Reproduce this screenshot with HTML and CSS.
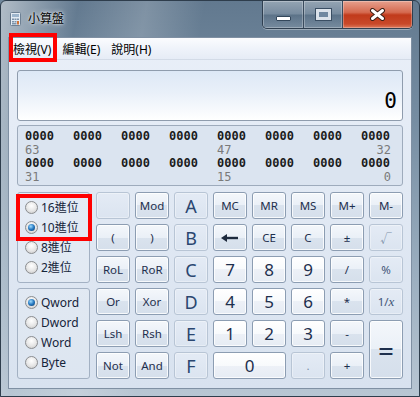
FILE: index.html
```html
<!DOCTYPE html>
<html lang="zh-Hant">
<head>
    <meta charset="UTF-8">
    <title>小算盤</title>
    <link rel="stylesheet" href="styles.css">
</head>
<body>
    <div class="window">
        <div class="titlebar">
            <svg class="app-icon" width="11" height="14" viewBox="0 0 11 14">
                <rect x="0.5" y="0.5" width="10" height="13" rx="1" fill="#e3ebf3" stroke="#6d8094"/>
                <rect x="2" y="2" width="7" height="3" fill="#9db5cc"/>
                <rect x="2" y="6.5" width="2" height="1.5" fill="#7d93aa"/>
                <rect x="4.5" y="6.5" width="2" height="1.5" fill="#7d93aa"/>
                <rect x="7" y="6.5" width="2" height="1.5" fill="#7d93aa"/>
                <rect x="2" y="9" width="2" height="1.5" fill="#7d93aa"/>
                <rect x="4.5" y="9" width="2" height="1.5" fill="#7d93aa"/>
                <rect x="7" y="9" width="2" height="3.5" fill="#d0743a"/>
                <rect x="2" y="11" width="4.5" height="1.5" fill="#7d93aa"/>
            </svg>
            <span class="title">小算盤</span>
            <div class="caption-buttons">
                <div class="cap-btn cap-min"><span class="min-bar"></span></div>
                <div class="cap-btn cap-max"><span class="max-box"></span></div>
                <div class="cap-btn cap-close">
                    <svg width="17" height="13" viewBox="0 0 17 13">
                        <path d="M3.5 2.5l10 8M13.5 2.5l-10 8" stroke="#3b2016" stroke-width="5" stroke-linecap="round"/>
                        <path d="M3.5 2.5l10 8M13.5 2.5l-10 8" stroke="#ffffff" stroke-width="3" stroke-linecap="round"/>
                    </svg>
                </div>
            </div>
        </div>

        <div class="client">
            <div class="menubar">
                <span class="menu-item">檢視(V)</span>
                <span class="menu-item">編輯(E)</span>
                <span class="menu-item">說明(H)</span>
            </div>

            <div class="calc">
                <div class="display">0</div>

                <div class="bits">
                    <div class="bit-row">
                        <span>0000</span><span>0000</span><span>0000</span><span>0000</span>
                        <span>0000</span><span>0000</span><span>0000</span><span>0000</span>
                    </div>
                    <div class="bit-labels">
                        <span class="c1">63</span><span class="c5">47</span><span class="c8">32</span>
                    </div>
                    <div class="bit-row">
                        <span>0000</span><span>0000</span><span>0000</span><span>0000</span>
                        <span>0000</span><span>0000</span><span>0000</span><span>0000</span>
                    </div>
                    <div class="bit-labels">
                        <span class="c1">31</span><span class="c5">15</span><span class="c8">0</span>
                    </div>
                </div>

                <div class="keys">
                    <div class="side">
                        <div class="group radix">
                            <div class="radio"><i></i>16進位</div>
                            <div class="radio on"><i></i>10進位</div>
                            <div class="radio"><i></i>8進位</div>
                            <div class="radio"><i></i>2進位</div>
                        </div>
                        <div class="group wordsize">
                            <div class="radio on"><i></i>Qword</div>
                            <div class="radio"><i></i>Dword</div>
                            <div class="radio"><i></i>Word</div>
                            <div class="radio"><i></i>Byte</div>
                        </div>
                    </div>

                    <div class="pad">
                        <div class="key off"></div>
                        <div class="key">Mod</div>
                        <div class="key off hex">A</div>
                        <div class="key">MC</div>
                        <div class="key">MR</div>
                        <div class="key">MS</div>
                        <div class="key">M+</div>
                        <div class="key">M-</div>

                        <div class="key">(</div>
                        <div class="key">)</div>
                        <div class="key off hex">B</div>
                        <div class="key">
                            <svg width="18" height="8" viewBox="0 0 18 8">
                                <path d="M5 4h12" stroke="#1d2a3d" stroke-width="2.4"/>
                                <path d="M0 4l6-4v8z" fill="#1d2a3d"/>
                            </svg>
                        </div>
                        <div class="key">CE</div>
                        <div class="key">C</div>
                        <div class="key">±</div>
                        <div class="key off">√</div>

                        <div class="key">RoL</div>
                        <div class="key">RoR</div>
                        <div class="key off hex">C</div>
                        <div class="key num">7</div>
                        <div class="key num">8</div>
                        <div class="key num">9</div>
                        <div class="key">/</div>
                        <div class="key off dim">%</div>

                        <div class="key">Or</div>
                        <div class="key">Xor</div>
                        <div class="key off hex">D</div>
                        <div class="key num">4</div>
                        <div class="key num">5</div>
                        <div class="key num">6</div>
                        <div class="key">*</div>
                        <div class="key off dim">1/<em>x</em></div>

                        <div class="key">Lsh</div>
                        <div class="key">Rsh</div>
                        <div class="key off hex">E</div>
                        <div class="key num">1</div>
                        <div class="key num">2</div>
                        <div class="key num">3</div>
                        <div class="key">-</div>
                        <div class="key equals">=</div>

                        <div class="key">Not</div>
                        <div class="key">And</div>
                        <div class="key off hex">F</div>
                        <div class="key num zero">0</div>
                        <div class="key off">.</div>
                        <div class="key">+</div>
                    </div>
                </div>
            </div>
        </div>

        <!-- red highlight boxes drawn over the screenshot -->
        <div class="mark mark-menu"></div>
        <div class="mark mark-radix"></div>
    </div>
</body>
</html>
```

FILE: styles.css
```css
* {
    box-sizing: border-box;
}
body {
    margin: 0;
    width: 420px;
    height: 397px;
    overflow: hidden;
    font-family: "Noto Sans", "Noto Sans CJK TC", sans-serif;
    background: #6f879c;
}
.window {
    position: relative;
    width: 420px;
    height: 397px;
    display: flex;
    flex-direction: column;
    padding: 0 7px 7px 7px;
    border: 1px solid #2e3d4c;
    border-radius: 6px 6px 0 0;
    background:
        linear-gradient(100deg, rgba(255, 255, 255, 0.5) 0, rgba(255, 255, 255, 0) 16%, rgba(255, 255, 255, 0.18) 30%, rgba(255, 255, 255, 0) 42%),
        linear-gradient(#62798f 0, #768da2 30%, #9cafc0 70%, #b8c6d3 100%);
}

/* title bar */
.titlebar {
    height: 36px;
    display: flex;
    align-items: flex-start;
}
.app-icon {
    margin: 11px 0 0 2px;
}
.title {
    margin: 10px 0 0 7px;
    font-size: 12px;
    line-height: 16px;
    color: #000;
    text-shadow: 0 0 5px rgba(255, 255, 255, 0.9), 0 0 2px rgba(255, 255, 255, 0.8);
}
.caption-buttons {
    margin-left: auto;
    margin-right: -1px;
    display: flex;
    height: 28px;
    border: 1px solid #2f3f50;
    border-top: none;
    border-radius: 0 0 5px 5px;
    overflow: hidden;
    box-shadow: 0 1px 0 rgba(255, 255, 255, 0.35);
}
.cap-btn {
    height: 27px;
    display: flex;
    align-items: center;
    justify-content: center;
    box-shadow: inset 0 0 0 1px rgba(255, 255, 255, 0.28);
}
.cap-min,
.cap-max {
    background: linear-gradient(rgba(255, 255, 255, 0.32), rgba(255, 255, 255, 0.12) 48%, rgba(30, 50, 70, 0.12) 52%, rgba(255, 255, 255, 0.1));
    border-right: 1px solid #3a4b5d;
}
.cap-min {
    width: 41px;
    align-items: flex-end;
    padding-bottom: 7px;
}
.cap-max {
    width: 39px;
}
.cap-close {
    width: 69px;
    background: linear-gradient(#e6a08d, #d56a50 42%, #c13a1b 52%, #c9492a 85%, #dd7a5c);
}
.min-bar {
    width: 15px;
    height: 5px;
    background: #fff;
    border: 1px solid #33475b;
    border-radius: 1px;
}
.max-box {
    width: 15px;
    height: 11px;
    border: 3px solid #dbe2ea;
    outline: 1px solid #3a4e63;
    background: #7088a0;
}

/* client area */
.client {
    flex: 1;
    display: flex;
    flex-direction: column;
    border: 1px solid #7f90a3;
    background: linear-gradient(#e9eff8, #d8e2ef);
}
.menubar {
    height: 22px;
    display: flex;
    align-items: center;
    background: linear-gradient(#fbfcfe, #eff3fa 50%, #e6ecf6);
    border-bottom: 1px solid #d3dbe7;
}
.menu-item {
    padding: 0 5px 0 4px;
    font-size: 12px;
    color: #000;
}
.menu-item + .menu-item {
    padding-left: 6px;
}
.calc {
    padding: 10px 8px 0 8px;
}

/* display */
.display {
    height: 51px;
    margin-bottom: 4px;
    padding: 0 5px 8px 0;
    display: flex;
    align-items: flex-end;
    justify-content: flex-end;
    border: 1px solid #8f9cad;
    border-radius: 3px;
    background: linear-gradient(#dde8f6, #e9f0f9 45%, #ffffff);
    font-family: "DejaVu Sans Mono", monospace;
    font-size: 21px;
    line-height: 21px;
    color: #000;
}

/* bit panel */
.bits {
    height: 61px;
    margin-bottom: 6px;
    padding: 4px 0 0 7px;
    border: 1px solid #9eabbc;
    border-radius: 3px;
    background: #dbe4f0;
    font-family: "DejaVu Sans Mono", monospace;
    font-size: 12px;
    line-height: 13.5px;
}
.bit-row,
.bit-labels {
    display: grid;
    grid-template-columns: repeat(8, 30px);
    column-gap: 18px;
}
.bit-row {
    color: #1c1c1c;
    font-weight: bold;
}
.bit-labels {
    color: #7a7a7a;
}
.bit-labels .c1 {
    grid-column: 1;
}
.bit-labels .c5 {
    grid-column: 5;
}
.bit-labels .c8 {
    grid-column: 8;
    justify-self: end;
}

/* keys */
.keys {
    display: flex;
    gap: 6px;
}
.side {
    width: 73px;
    display: flex;
    flex-direction: column;
    gap: 5px;
}
.group {
    height: 91px;
    padding: 4px 0 0 7px;
    border: 1px solid #a3b1c3;
    border-radius: 3px;
    background: rgba(255, 255, 255, 0.12);
}
.wordsize {
    padding-top: 3px;
}
.radio {
    display: flex;
    align-items: center;
    height: 20px;
    font-size: 12px;
    color: #15243a;
}
.radio i {
    position: relative;
    width: 13px;
    height: 13px;
    margin-right: 3px;
    border: 1px solid #8b8d90;
    border-radius: 50%;
    background: radial-gradient(circle at 50% 35%, #ffffff, #e6e6e6 55%, #c4c4c4);
}
.radio.on i::after {
    content: "";
    position: absolute;
    top: 2px;
    left: 2px;
    width: 7px;
    height: 7px;
    border-radius: 50%;
    background: radial-gradient(circle at 40% 35%, #9fdcff, #2477c0 50%, #0b355f);
}

.pad {
    display: grid;
    grid-template-columns: repeat(8, 34px);
    grid-template-rows: repeat(6, 27px);
    gap: 5px;
}
.key {
    display: flex;
    align-items: center;
    justify-content: center;
    border: 1px solid #8c9db2;
    border-radius: 3px;
    background: linear-gradient(#f4f7fb, #eaf0f7 50%, #dae3ee 50%, #d5dfeb);
    box-shadow: inset 0 0 0 1px rgba(255, 255, 255, 0.8);
    font-size: 11.5px;
    color: #1e2f4d;
}
.key.num {
    font-size: 17px;
    background: linear-gradient(#ffffff, #f8fafc 50%, #edf1f7 50%, #e6ecf4);
}
.key.off {
    border-color: #b8c5d5;
    background: linear-gradient(#e4ebf5, #dbe4f0);
    box-shadow: inset 0 0 0 1px rgba(255, 255, 255, 0.35);
    color: #7d90a8;
}
.key.off.dim {
    color: #3f5477;
}
.key.hex {
    font-size: 18px;
    color: #2a4670;
}
.key em {
    font-family: "Liberation Serif", serif;
    font-size: 13px;
}
.key.zero {
    grid-column: span 2;
}
.key.equals {
    grid-row: span 2;
    font-size: 28px;
}

/* red annotation boxes */
.mark {
    position: absolute;
    border: 4px solid #ff0000;
}
.mark-menu {
    left: 8px;
    top: 32px;
    width: 48px;
    height: 29px;
}
.mark-radix {
    left: 15px;
    top: 193px;
    width: 76px;
    height: 47px;
}
```
